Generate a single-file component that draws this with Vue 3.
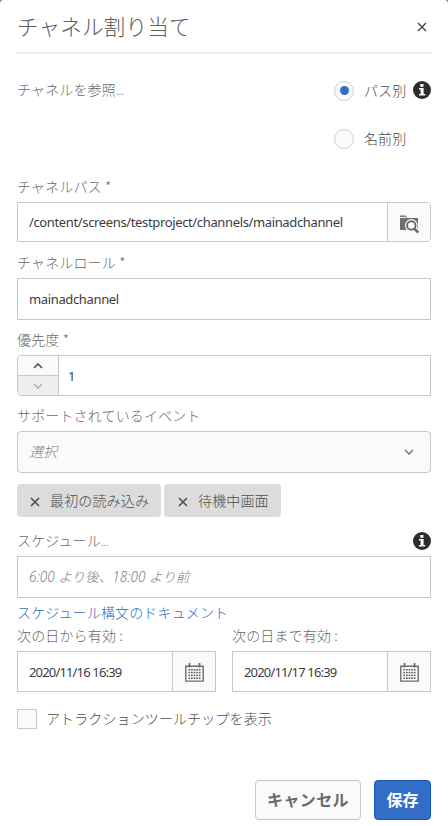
<script setup>
import { ref } from 'vue'

const mode = ref('path')
const modes = [
  { id: 'path', label: 'パス別', info: true },
  { id: 'name', label: '名前別', info: false },
]
const path = ref('/content/screens/testproject/channels/mainadchannel')
const role = ref('mainadchannel')
const priority = ref('1')
const events = ref(['最初の読み込み', '待機中画面'])
const dates = ref([
  { label: '次の日から有効 :', value: '2020/11/16 16:39' },
  { label: '次の日まで有効 :', value: '2020/11/17 16:39' },
])
const dots = [0, 1, 2, 3, 4].flatMap((c) => [0, 1, 2, 3].map((r) => ({ x: 4 + c * 2.6, y: 6 + r * 2.8 })))
</script>

<template>
  <div class="dialog">
    <header class="head">
      <h1>チャネル割り当て</h1>
      <svg class="close" width="10" height="10" viewBox="0 0 10 10"><path d="M1 1l8 8M9 1L1 9" /></svg>
    </header>

    <section class="reference">
      <span class="label">チャネルを参照<span class="dots">...</span></span>
      <div class="radios">
        <div v-for="m in modes" :key="m.id" class="radio" @click="mode = m.id">
          <span class="circle"><i v-if="mode === m.id"></i></span>
          <span class="radio-text">{{ m.label }}</span>
          <svg v-if="m.info" class="info" width="18" height="18" viewBox="0 0 18 18">
            <circle cx="9" cy="9" r="9" /><path d="M7.3 3h3.2v2.7H7.3zM6 7h4.6v5.9h1.6v1.6H6v-1.6h1.6V8.6H6z" />
          </svg>
        </div>
      </div>
    </section>

    <div class="label path-label">チャネルパス *</div>
    <div class="field path-field">
      <span class="value path-value">{{ path }}</span>
      <span class="addon">
        <svg width="20" height="20" viewBox="0 0 20 20">
          <path d="M1 16V1.5h5.5L8 4h11v12z" fill="#707070" />
          <path d="M1 3.4h6" stroke="#fafafa" />
          <circle cx="12.3" cy="11.4" r="6.3" fill="#fafafa" />
          <path d="M15.5 14.5l3.5 4" stroke="#fafafa" stroke-width="5" />
          <circle cx="12.3" cy="11.4" r="4.2" fill="#fafafa" stroke="#666" stroke-width="1.9" />
          <path d="M15.3 14.6l4 4" stroke="#666" stroke-width="2.5" />
        </svg>
      </span>
    </div>

    <div class="label role-label">チャネルロール *</div>
    <div class="field tall"><span class="value">{{ role }}</span></div>

    <div class="label priority-label">優先度 *</div>
    <div class="field number">
      <span class="stepper">
        <span class="step"><svg width="10" height="6" viewBox="0 0 10 6"><path d="M1 5l4-4 4 4" /></svg></span>
        <span class="step off"><svg width="10" height="6" viewBox="0 0 10 6"><path d="M1 1l4 4 4-4" /></svg></span>
      </span>
      <span class="value count">{{ priority }}</span>
    </div>

    <div class="label events-label">サポートされているイベント</div>
    <div class="field select">
      <span class="placeholder">選択</span>
      <svg width="10" height="6" viewBox="0 0 10 6"><path d="M1 1l4 4 4-4" /></svg>
    </div>

    <div class="tags">
      <span v-for="e in events" :key="e" class="tag">
        <svg width="10" height="10" viewBox="0 0 10 10"><path d="M1 1l8 8M9 1L1 9" /></svg>{{ e }}
      </span>
    </div>

    <div class="schedule-head">
      <span class="label">スケジュール<span class="dots">...</span></span>
      <svg class="info" width="18" height="18" viewBox="0 0 18 18">
        <circle cx="9" cy="9" r="9" /><path d="M7.3 3h3.2v2.7H7.3zM6 7h4.6v5.9h1.6v1.6H6v-1.6h1.6V8.6H6z" />
      </svg>
    </div>
    <div class="field tall"><span class="placeholder hours">6:00 より後、18:00 より前</span></div>
    <a class="link">スケジュール構文のドキュメント</a>

    <div class="dates">
      <div v-for="d in dates" :key="d.label">
        <div class="label date-label">{{ d.label }}</div>
        <div class="field date">
          <span class="value date-value">{{ d.value }}</span>
          <span class="addon">
            <svg width="19" height="19" viewBox="0 0 19 19">
              <path d="M.8 3.2h17.4v14.9H.8z" fill="#fff" stroke="#6b6b6b" stroke-width="1.4" />
              <path d="M4.5 0v4.5M14.5 0v4.5" stroke="#6b6b6b" stroke-width="1.8" />
              <rect v-for="(p, i) in dots" :key="i" :x="p.x - 0.6" :y="p.y" width="1.7" height="1.6" fill="#5c6068" />
            </svg>
          </span>
        </div>
      </div>
    </div>

    <label class="check"><span class="box"></span><span class="check-text">アトラクションツールチップを表示</span></label>

    <footer class="actions">
      <button class="cancel">キャンセル</button>
      <button class="save">保存</button>
    </footer>
  </div>
</template>

<style>
body { background: #8c8c8c; }
</style>

<style scoped>
.dialog {
  box-sizing: border-box;
  width: 448px;
  height: 826px;
  padding: 0 17px;
  background: #fff;
  border-radius: 4px 4px 0 0;
  font-family: "Noto Sans", "Noto Sans CJK JP", sans-serif;
  font-size: 14px;
  color: #4b4b4b;
}
svg { display: block; flex: none; fill: none; }
.head {
  box-sizing: border-box;
  height: 54px;
  display: flex;
  align-items: center;
  justify-content: space-between;
  border-bottom: 2px solid #eee;
}
h1 {
  margin: 0 0 1px;
  font: 300 21.6px/30px "Noto Sans CJK JP", sans-serif;
  letter-spacing: .15px;
  color: #606060;
}
.close { margin: 2px 4px 0 0; stroke: #4b4b4b; stroke-width: 1.5; }
.label {
  font-family: "Noto Sans CJK JP", sans-serif;
  font-weight: 300;
  font-size: 14px;
  line-height: 18px;
  letter-spacing: .15px;
  color: #6a6a6a;
  white-space: pre;
}
.dots { font-size: 12px; letter-spacing: -.5px; }
.reference { display: flex; justify-content: space-between; height: 123px; padding-top: 25px; box-sizing: border-box; }
.reference > .label { line-height: 20px; }
.radios { width: 97px; }
.radio { display: flex; align-items: center; height: 23px; margin-bottom: 25px; }
.circle {
  box-sizing: border-box;
  width: 20px;
  height: 20px;
  display: grid;
  place-items: center;
  border: 1px solid #cfcfcf;
  border-radius: 50%;
  background: #fafafa;
}
.circle i { width: 9px; height: 9px; border-radius: 50%; background: #326ec8; }
.radio-text { margin: 0 0 2px 10px; width: 49px; font: 300 14px/20px "Noto Sans CJK JP", sans-serif; letter-spacing: .1px; white-space: nowrap; }
.info { margin-left: auto; }
.radio .info { margin-bottom: 1px; }
.info circle { fill: #2c2c2c; }
.info path { fill: #fff; }
.path-label { height: 25px; }
.field {
  box-sizing: border-box;
  display: flex;
  align-items: center;
  height: 41px;
  border: 1px solid #c8c8c8;
  background: #fff;
}
.tall { height: 42px; }
.value { flex: 1; padding-left: 11px; font-size: 13px; line-height: 18px; letter-spacing: -.36px; color: #3c3c3c; white-space: nowrap; }
.count { padding-left: 9px; }
.date-value { letter-spacing: -.84px; }
.path-field { height: 40px; border-radius: 0 4px 4px 0; overflow: hidden; }
.addon {
  box-sizing: border-box;
  width: 43px;
  align-self: stretch;
  display: grid;
  place-items: center;
  border-left: 1px solid #c8c8c8;
  background: #fafafa;
}
.path-field .addon { padding-top: 3px; }
.date .addon { padding-top: 2px; }
.role-label { margin-top: 11px; height: 25px; }
.priority-label { margin-top: 10px; height: 25px; }
.number { border-radius: 4px 0 0 4px; overflow: hidden; }
.stepper { width: 40px; align-self: stretch; display: flex; flex-direction: column; border-right: 1px solid #c8c8c8; }
.step { flex: 1; display: grid; place-items: center; background: #fafafa; stroke: #4b4b4b; stroke-width: 1.5; }
.off { border-top: 1px solid #c8c8c8; background: #eee; stroke: #b0b0b0; }
.events-label { margin-top: 10px; height: 25px; }
.select { height: 42px; justify-content: space-between; border-radius: 4px; background: #fafafa; padding-right: 16px; stroke: #747474; stroke-width: 1.5; }
.placeholder { padding-left: 11px; font: italic 300 14px/20px "Noto Sans", "Noto Sans CJK JP", sans-serif; color: #808080; stroke: none; white-space: nowrap; }
.tags { display: flex; gap: 3px; margin-top: 11px; }
.tag {
  display: flex;
  align-items: center;
  box-sizing: border-box;
  height: 33px;
  padding: 0 12px 2px 13px;
  border-radius: 4px;
  background: #dcdcdc;
  font: 300 14px/20px "Noto Sans CJK JP", sans-serif;
  letter-spacing: .15px;
  white-space: nowrap;
}
.tag svg { margin: 4px 10px 0 0; stroke: #4b4b4b; stroke-width: 1.5; }
.tag:first-child { width: 144px; }
.tag:last-child { width: 117px; padding-left: 14px; }
.schedule-head { display: flex; align-items: center; height: 20px; margin: 14px 0 5px; }
.schedule-head .label { margin-bottom: 2px; }
.hours { font-size: 13.6px; }
.link { display: block; margin-top: 5px; height: 20px; font: 300 14px/18px "Noto Sans CJK JP", sans-serif; letter-spacing: .15px; color: #326ec8; }
.dates { display: grid; grid-template-columns: 199px 199px; gap: 16px; margin-top: 3px; }
.date-label { height: 25px; }
.date { height: 41px; }
.check { display: flex; align-items: center; gap: 9px; height: 20px; margin-top: 17px; font: 300 14px/20px "Noto Sans CJK JP", sans-serif; letter-spacing: .12px; white-space: nowrap; }
.check-text { margin-bottom: 2px; }
.box { box-sizing: border-box; width: 20px; height: 20px; border: 1px solid #c8c8c8; background: #fafafa; }
.actions { display: flex; justify-content: flex-end; gap: 13px; margin-top: 51px; }
button {
  box-sizing: border-box;
  height: 40px;
  padding: 0 0 2px;
  border: 1px solid #c8c8c8;
  border-radius: 4px;
  font: 700 16px/22px "Noto Sans CJK JP", sans-serif;
  white-space: nowrap;
}
.cancel { width: 106px; background: #fafafa; color: #6b6b6b; letter-spacing: .4px; }
.save { width: 57px; background: #326ec8; border-color: #1857b8; color: #fff; }
</style>
